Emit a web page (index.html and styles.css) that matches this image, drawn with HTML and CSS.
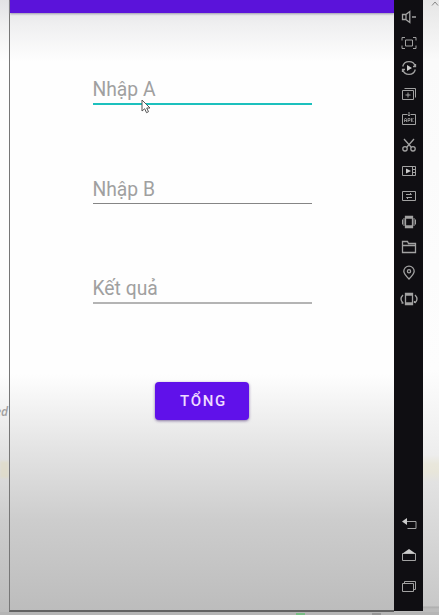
FILE: index.html
```
<!DOCTYPE html>
<html lang="vi">
<head>
<meta charset="utf-8">
<title>Tổng</title>
<link rel="stylesheet" href="styles.css">
</head>
<body>
<div class="desktop">
  <aside class="edge edge-left"><span class="edge-text">ed</span><span class="edge-mark"></span></aside>
  <div class="emulator">
    <main class="app">
      <header class="app-bar"></header>
      <form class="form">
        <div class="field field-active"><span>Nhập A</span>
          <svg class="cursor" width="10" height="15" viewBox="0 0 10 15"><path d="M1 1v11l2.7-2.3 1.8 4 2-1-1.8-3.7H9z" fill="#fff" stroke="#555" stroke-width="1"/></svg>
        </div>
        <div class="field"><span>Nhập B</span></div>
        <div class="field field-result"><span>Kết quả</span></div>
        <button class="button" type="button">TỔNG</button>
      </form>
    </main>
    <nav class="toolbar">
      <div class="tools">
        <svg viewBox="0 0 18 18"><path class="bold" d="M2.5 6.5h3.3l4-3v11l-4-3H2.500zM6 6.500v5M12 9h4"/></svg>
        <svg viewBox="0 0 18 18"><path d="M2 6.500v-3h3M13 3.500h3v3M16 11.500v3h-3M5 14.500H2v-3M5.500 6h7v6h-7z"/></svg>
        <svg viewBox="0 0 18 18"><path class="bold" d="M2.700 7.500A6.500 6.500 0 0 1 15.300 7.500M15.300 10.500A6.500 6.500 0 0 1 2.700 10.500M15.500 5v2.500H13M2.500 13v-2.500H5"/><path class="solid" d="M7 6l5 3-5 3z"/></svg>
        <svg viewBox="0 0 18 18"><path d="M2.500 5.500h11v9h-11zM4.500 3.500h11v9M8 7.500v5M5.500 10h5"/></svg>
        <svg viewBox="0 0 18 18"><path d="M7 4.500H2.500v10h13v-10H11M9 2v4M7.500 4.500L9 6l1.500-1.500"/><path class="fine" d="M4.500 12V9.500L5.500 8l1 1.500V12M4.500 10.500h2M8 12V8.500h2v2H8M11.500 8v4M13.500 8l-2 2 2 2"/></svg>
        <svg viewBox="0 0 18 18"><path class="bold" d="M4 3l7.300 8.200M14 3l-7.300 8.200"/><circle class="bold" cx="5" cy="12.800" r="2.200"/><circle class="bold" cx="13" cy="12.800" r="2.200"/></svg>
        <svg viewBox="0 0 18 18"><path d="M2.500 4.500h13v9h-13zM12.500 4.500v9M13 7.500h2M13 10.500h2"/><path class="solid" d="M6 6.500l5 2.500-5 2.500z"/></svg>
        <svg viewBox="0 0 18 18"><path d="M2.500 4.500h13v9h-13zM6 7.500h5.500L10 6M12 10.500H6.500L8 12"/></svg>
        <svg viewBox="0 0 18 18"><path class="bold" d="M5.500 3.500h7v11h-7zM5.500 5h7M5.500 13h7"/><path d="M4 5v8M14 5v8M2.500 6.500v5M15.500 6.500v5"/></svg>
        <svg viewBox="0 0 18 18"><path class="bold" d="M2.500 14.500v-11h5l1 2h7v9zM2.500 7.500h13"/></svg>
        <svg viewBox="0 0 18 18"><path class="bold" d="M9 15C5.500 11.500 3.800 9.500 3.800 7.300a5.200 5.200 0 0 1 10.400 0C14.200 9.500 12.500 11.500 9 15z"/><circle class="bold" cx="9" cy="7.300" r="1.600"/></svg>
        <svg viewBox="0 0 18 18"><path class="bold" d="M5.500 3.500h7v11h-7zM5.500 5h7M5.500 13h7M3 5C.5 7.500.5 10.500 3 13M15 5c2.500 2.500 2.500 5.500 0 8M1.500 13H3.500M14.500 13v-2"/></svg>
      </div>
      <div class="keys">
        <svg viewBox="0 0 18 18"><path d="M6 6.500h10v7H7.500"/><path class="solid" d="M2 6.500L7 3v7z"/></svg>
        <svg viewBox="0 0 18 18"><path d="M2.500 7.500h13v7h-13z"/><path class="solid" d="M2.500 7.500L9 3l6.500 4.500z"/></svg>
        <svg viewBox="0 0 18 18"><path d="M2.500 6.500h11v8h-11zM4.500 6V4.500h11v8h-2"/></svg>
      </div>
    </nav>
  </div>
  <aside class="edge edge-right"><svg class="corner" width="8" height="5" viewBox="0 0 8 5"><path d="M1 4.500L4 1l3 3.500"/></svg></aside>
  <footer class="taskbar"><span class="task task-green"></span><span class="task"></span></footer>
</div>
</body>
</html>
```
FILE: styles.css
```
* { box-sizing: border-box; }
body { margin: 0; font-family: Roboto, sans-serif; }
.desktop {
  display: grid;
  grid-template-columns: 9px 414px 16px;
  grid-template-rows: 612px 3px;
  width: 439px;
  height: 615px;
  overflow: hidden;
  background: linear-gradient(#e2e2e4 0, #f0f0f1 26px, #fefefe 62px, #fefefe 374px, #e5e5e5 445px, #cdcdcd 520px, #bcbcbc 612px);
}
.edge { overflow: hidden; }
.edge-left { display: flex; flex-direction: column; align-items: flex-end; padding-top: 404px; }
.edge-text { font: italic 600 12px/16px "Open Sans", sans-serif; color: #a0a0a0; padding-right: 1px; }
.edge-mark { width: 9px; height: 17px; margin-top: 41px; background: #e2dcc2; opacity: .6; filter: blur(1px); }
.edge-right { background: linear-gradient(#e6e6e6 0, #fafafa 60px, #fdfdfd 370px, #ededed 455px, #e9e7dc 464px, #e8e6da 472px, #e2e2e2 482px, #c8c8c8 606px, #adadad 607px, #bcbcbc 609px); }
.corner { display: block; margin: 1px 0 0 8px; fill: none; stroke: #888; }
.emulator { display: flex; height: 612px; }
.app {
  width: 385px;
  height: 612px;
  border-left: 1px solid #777;
  border-bottom: 2px solid #626262;
}
.app-bar { height: 13px; background: #5b13da; box-shadow: 0 1px 2px #9996aa; }
.form { display: flex; flex-direction: column; align-items: center; padding-top: 62px; }
.field {
  position: relative;
  width: 219px;
  height: 29px;
  margin-bottom: 70px;
  border-bottom: 1px solid #858585;
  color: #a0a0a0;
  font-size: 19.300px;
  line-height: 29px;
}
.field-active { height: 30px; border-bottom: 2px solid #1cc0bd; }
.field-result { height: 30px; margin-bottom: 78px; border-bottom: 2px solid #b4b4b4; }
.cursor { position: absolute; left: 48px; top: 24px; }
.button {
  width: 94px;
  height: 38px;
  padding: 1px 0 0 3px;
  border: 0;
  border-radius: 4px;
  background: #6011ea;
  color: #efdcff;
  font: 500 15px/37px Roboto, sans-serif;
  letter-spacing: 1.700px;
  box-shadow: 0 1px 3px rgba(65, 35, 110, .6);
}
.toolbar {
  display: flex;
  flex-direction: column;
  justify-content: space-between;
  align-items: center;
  width: 29px;
  height: 611px;
  padding: 8px 0 16px;
  background: #0f0e12;
}
.tools, .keys { display: flex; flex-direction: column; }
.tools { gap: 7.600px; }
.keys { gap: 13px; }
.toolbar svg { display: block; width: 18px; height: 18px; fill: none; stroke: #a2a2a2; stroke-width: 1; }
.toolbar .solid { fill: #ccc; stroke: none; }
.toolbar .fine { stroke-width: .8; }
.toolbar .bold { stroke-width: 1.300; }
.taskbar { grid-column: 1 / -1; display: flex; gap: 67px; padding: 1px 0 0 296px; background: #b5b5b5; }
.task { width: 9px; height: 2px; background: #969696; }
.task-green { background: #78bd84; }
```
